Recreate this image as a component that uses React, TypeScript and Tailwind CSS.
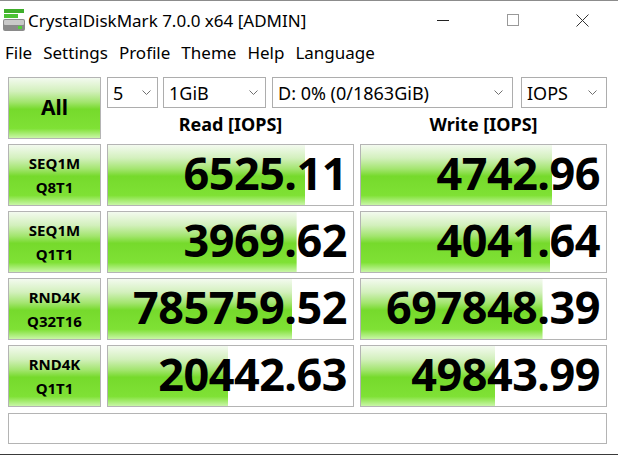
import React from 'react';

const green =
  'bg-[linear-gradient(to_bottom,#f3faef_0%,#d3f0bd_22%,#a3e56f_40%,#76da2c_52%,#7fe135_84%,#c9f6a8_100%)]';

const rows = [
  { a: 'SEQ1M', b: 'Q8T1', read: '6525.11', rp: 80.6, write: '4742.96', wp: 78.1 },
  { a: 'SEQ1M', b: 'Q1T1', read: '3969.62', rp: 77, write: '4041.64', wp: 77.3 },
  { a: 'RND4K', b: 'Q32T16', read: '785759.52', rp: 75.3, write: '697848.39', wp: 74.1 },
  { a: 'RND4K', b: 'Q1T1', read: '20442.63', rp: 49, write: '49843.99', wp: 54.7 },
];

const Chevron = () => (
  <svg width="9" height="5" viewBox="0 0 9 5" className="shrink-0">
    <path d="M0.5 0.5 L4.5 4.5 L8.5 0.5" fill="none" stroke="#707070" strokeWidth="1" />
  </svg>
);

const Select = ({ label, w, gap }: { label: string; w: string; gap: string }) => (
  <div className={`${w} h-[31px] border border-[#adadad] bg-white flex items-center justify-between pl-[5px] ${gap}`}>
    <span className="text-[18px] text-black leading-none">{label}</span>
    <Chevron />
  </div>
);

const Meter = ({ value, pct }: { value: string; pct: number }) => (
  <div
    className={`h-[62px] border border-[#b4b4b4] bg-white bg-no-repeat ${green} flex items-center justify-end pr-[6px]`}
    style={{ backgroundSize: `${pct}% 100%` }}
  >
    <span className="text-[45px] font-bold text-black leading-none tracking-[-0.5px] pb-[6px]">{value}</span>
  </div>
);

const AppIcon = () => (
  <svg width="24" height="26" viewBox="0 0 24 26">
    <rect x="2" y="2" width="20" height="4" fill="#3fae2a" />
    <rect x="2" y="7" width="14" height="4" fill="#4cc234" />
    <rect x="1" y="12" width="22" height="12" rx="2" fill="#8a8a8a" />
    <rect x="2" y="13" width="20" height="5" rx="1" fill="#c9c9c9" />
    <rect x="16" y="19" width="4" height="3" fill="#52d03a" />
  </svg>
);

export default function App() {
  return (
    <div className="w-[618px] h-[455px] bg-white flex flex-col font-['Noto_Sans',sans-serif] text-black border-t border-[#8c8c8c] border-b border-b-[#3a3a3a]">
      {/* title bar */}
      <div className="h-[38px] flex items-center pl-[2px]">
        <AppIcon />
        <span className="ml-[2px] text-[17px] leading-none">CrystalDiskMark 7.0.0 x64 [ADMIN]</span>
        <div className="ml-auto flex items-center h-full">
          <div className="w-[70px] flex justify-center">
            <div className="w-[12px] h-px bg-[#222]" />
          </div>
          <div className="w-[70px] flex justify-center">
            <div className="w-[12px] h-[12px] border border-[#999]" />
          </div>
          <div className="w-[70px] flex justify-center pr-[2px]">
            <svg width="13" height="13" viewBox="0 0 13 13">
              <path d="M0.5 0.5 L12.5 12.5 M12.5 0.5 L0.5 12.5" stroke="#333" strokeWidth="1" />
            </svg>
          </div>
        </div>
      </div>

      {/* menu */}
      <div className="h-[30px] flex items-center gap-[11px] pl-[5px] text-[17px] pb-[2px]">
        <span>File</span>
        <span>Settings</span>
        <span>Profile</span>
        <span>Theme</span>
        <span>Help</span>
        <span>Language</span>
      </div>

      {/* main */}
      <div className="pt-[8px] pl-[8px] grid grid-cols-[93px_247px_247px] gap-x-[6px] gap-y-[5px]">
        <div className={`h-[62px] border border-[#b4b4b4] ${green} flex items-center justify-center`}>
          <span className="text-[21px] font-bold leading-none pb-[2px]">All</span>
        </div>
        <div className="col-span-2 flex flex-col">
          <div className="flex">
            <Select label="5" w="w-[51px]" gap="pr-[6px]" />
            <div className="w-[5px]" />
            <Select label="1GiB" w="w-[103px]" gap="pr-[7px]" />
            <div className="w-[6px]" />
            <Select label="D: 0% (0/1863GiB)" w="w-[241px]" gap="pr-[9px]" />
            <div className="w-[8px]" />
            <Select label="IOPS" w="w-[86px]" gap="pr-[9px]" />
          </div>
          <div className="flex flex-1 items-center">
            <div className="w-[247px] text-center text-[18px] font-bold leading-none">Read [IOPS]</div>
            <div className="w-[6px]" />
            <div className="w-[247px] text-center text-[18px] font-bold leading-none">Write [IOPS]</div>
          </div>
        </div>

        {rows.map((r, i) => (
          <React.Fragment key={i}>
            <div className={`h-[62px] border border-[#b4b4b4] ${green} flex flex-col items-center justify-center gap-[9px]`}>
              <span className="text-[15px] font-bold leading-none">{r.a}</span>
              <span className="text-[15px] font-bold leading-none">{r.b}</span>
            </div>
            <Meter value={r.read} pct={r.rp} />
            <Meter value={r.write} pct={r.wp} />
          </React.Fragment>
        ))}

        <div className="col-span-3 mt-[1px] h-[31px] border border-[#b4b4b4] bg-white" />
      </div>
    </div>
  );
}
